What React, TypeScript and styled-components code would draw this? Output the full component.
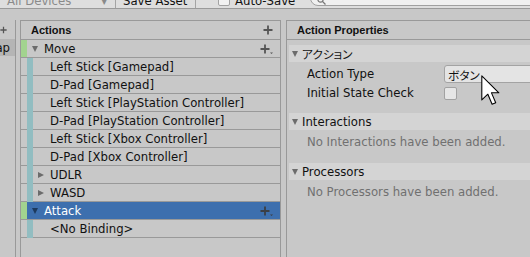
import React from 'react'
import styled, { createGlobalStyle } from 'styled-components'

const GlobalStyle = createGlobalStyle`
  html, body {
    margin: 0;
    padding: 0;
    background: #c8c8c8;
  }
  body {
    font-family: "DejaVu Sans", "Noto Sans CJK JP", sans-serif;
    font-size: 11.7px;
    color: #111;
  }
`

const Window = styled.div`
  position: relative;
  width: 530px;
  height: 257px;
  overflow: hidden;
  display: flex;
  flex-direction: column;
  background: #c8c8c8;
`

/* ---------- toolbar ---------- */

const Toolbar = styled.div`
  flex: none;
  height: 14px;
  margin-top: -6px;
  display: flex;
  align-items: center;
  background: #dedede;
  border-bottom: 1px solid #9a9a9a;
  white-space: nowrap;
`

const DeviceMenu = styled.div`
  box-sizing: border-box;
  width: 116px;
  height: 100%;
  padding: 0 8px 0 7px;
  display: flex;
  align-items: center;
  justify-content: space-between;
  color: #8a8a8a;
  border-right: 1px solid #a4a4a4;
`

const ToolButton = styled.div`
  box-sizing: border-box;
  width: 80px;
  height: 100%;
  padding-left: 7px;
  display: flex;
  align-items: center;
  border-right: 1px solid #a4a4a4;
`

const ToggleLabel = styled.label`
  display: flex;
  align-items: center;
  gap: 5px;
  margin-left: 22px;
`

const CheckBox = styled.span<{ $size: number }>`
  box-sizing: border-box;
  width: ${p => p.$size}px;
  height: ${p => p.$size}px;
  flex: none;
  background: #e6e6e6;
  border: 1px solid #a2a2a2;
  border-radius: 2px;
`

const ToolbarCheck = styled(CheckBox)`
  margin-bottom: 3px;
  background: #f2f2f2;
`

const SearchField = styled.div`
  flex: 1;
  align-self: flex-end;
  height: 16px;
  margin: 0 -6px 2px 15px;
  display: flex;
  align-items: flex-end;
  padding-left: 6px;
  background: #f0f0f0;
  border: 1px solid #a0a0a0;
  border-radius: 8px 0 0 8px;
`

/* ---------- panels ---------- */

const Body = styled.div`
  flex: 1;
  min-height: 0;
  display: flex;
  gap: 4px;
  padding-top: 11px;
`

const MapsPanel = styled.section`
  box-sizing: border-box;
  width: 16px;
  flex: none;
  overflow: hidden;
  border-right: 1px solid #999;
  display: flex;
  flex-direction: column;
`

const MapsHeader = styled.div`
  height: 19px;
  display: flex;
  align-items: center;
  justify-content: flex-end;
  padding-right: 8px;
`

const MapRow = styled.div<{ $selected?: boolean }>`
  height: 17px;
  display: flex;
  align-items: center;
  justify-content: flex-end;
  padding-right: 5px;
  white-space: nowrap;
  background: ${p => (p.$selected ? '#b5b5b5' : 'transparent')};
`

const Panel = styled.section`
  display: flex;
  flex-direction: column;
  border: 1px solid #999;
  border-bottom: none;
`

const ActionsPanel = styled(Panel)`
  box-sizing: border-box;
  width: 261px;
  flex: none;
`

const PropsPanel = styled(Panel)`
  flex: 1;
  margin-left: 1px;
  border-right: none;
`

const PanelHeader = styled.div`
  height: 18px;
  flex: none;
  display: flex;
  align-items: center;
  justify-content: space-between;
  padding: 0 7px 0 10px;
  border-bottom: 1px solid #999;
  font: bold 11px "Liberation Sans", Arial, sans-serif;
  color: #111;
`

/* ---------- action tree ---------- */

const TreeRow = styled.div<{ $selected?: boolean }>`
  height: 17px;
  flex: none;
  display: flex;
  align-items: center;
  padding-right: 7px;
  border-bottom: 1px solid #999;
  white-space: nowrap;
  background: ${p => (p.$selected ? '#3d6fae' : 'transparent')};
  color: ${p => (p.$selected ? '#fff' : '#111')};
`

const Strip = styled.span<{ $color?: string; $through?: boolean }>`
  width: 6px;
  flex: none;
  align-self: stretch;
  margin-bottom: ${p => (p.$through ? '-1px' : '0')};
  background: ${p => p.$color || 'transparent'};
`

const Triangle = styled.span<{ $dir: 'down' | 'right'; $color?: string; $gap: number }>`
  flex: none;
  width: 0;
  height: 0;
  margin-left: ${p => p.$gap}px;
  ${p =>
    p.$dir === 'down'
      ? `border-left: 3.5px solid transparent;
         border-right: 3.5px solid transparent;
         border-top: 6px solid ${p.$color || '#6c6c6c'};`
      : `border-top: 3.5px solid transparent;
         border-bottom: 3.5px solid transparent;
         border-left: 6px solid ${p.$color || '#6c6c6c'};`}
`

const Label = styled.span<{ $gap: number }>`
  flex: 1;
  margin-left: ${p => p.$gap}px;
`

/* ---------- properties ---------- */

const Foldout = styled.div<{ $top: number }>`
  height: 17px;
  flex: none;
  margin: ${p => p.$top}px 0 0 2px;
  padding-left: 3px;
  display: flex;
  align-items: center;
  background: #d4d4d4;
  white-space: nowrap;
`

const FoldoutTitle = styled.span`
  margin-left: 4px;
  font-feature-settings: "palt";
`

const FieldRow = styled.div<{ $top: number }>`
  height: 18px;
  flex: none;
  margin-top: ${p => p.$top}px;
  padding-left: 20px;
  display: flex;
  align-items: center;
  white-space: nowrap;
`

const FieldLabel = styled.span`
  width: 137px;
  flex: none;
`

const Dropdown = styled.div`
  flex: 1;
  align-self: stretch;
  margin-right: -6px;
  padding-left: 3px;
  display: flex;
  align-items: center;
  background: #e4e4e4;
  border: 1px solid #a3a3a3;
  border-radius: 3px;
  font-feature-settings: "palt";
`

const Note = styled.div`
  height: 22px;
  flex: none;
  margin-top: 1px;
  padding-left: 20px;
  display: flex;
  align-items: center;
  color: #707070;
  white-space: nowrap;
`

const Cursor = styled.svg`
  position: absolute;
  left: 481px;
  top: 75px;
`

const AddIcon = ({ menu, color = '#555' }: { menu?: boolean; color?: string }) => (
  <svg width={menu ? 13 : 10} height="10" viewBox={menu ? '0 0 13 10' : '0 0 10 10'}>
    <path d="M5 0.5V9.5M0.5 5H9.5" stroke={color} strokeWidth="1.8" />
    {menu && <path d="M10 8.5H13L11.5 10Z" fill={color} />}
  </svg>
)

type Node =
  | { kind: 'action'; name: string; selected?: boolean }
  | { kind: 'binding'; name: string }
  | { kind: 'composite'; name: string }

const tree: Node[] = [
  { kind: 'action', name: 'Move' },
  { kind: 'binding', name: 'Left Stick [Gamepad]' },
  { kind: 'binding', name: 'D-Pad [Gamepad]' },
  { kind: 'binding', name: 'Left Stick [PlayStation Controller]' },
  { kind: 'binding', name: 'D-Pad [PlayStation Controller]' },
  { kind: 'binding', name: 'Left Stick [Xbox Controller]' },
  { kind: 'binding', name: 'D-Pad [Xbox Controller]' },
  { kind: 'composite', name: 'UDLR' },
  { kind: 'composite', name: 'WASD' },
  { kind: 'action', name: 'Attack', selected: true },
  { kind: 'binding', name: '<No Binding>' },
]

const GREEN = '#a2d38f'
const TEAL = '#92bdc1'

const TreeItem = ({ node }: { node: Node }) => {
  if (node.kind === 'action') {
    return (
      <TreeRow $selected={node.selected}>
        <Strip $color={GREEN} />
        <Triangle $dir="down" $gap={5} $color={node.selected ? '#1d3a5e' : undefined} />
        <Label $gap={6}>{node.name}</Label>
        <AddIcon menu color={node.selected ? '#3b3f46' : '#555'} />
      </TreeRow>
    )
  }
  return (
    <TreeRow>
      <Strip />
      <Strip $color={TEAL} $through />
      {node.kind === 'composite' ? (
        <>
          <Triangle $dir="right" $gap={5} />
          <Label $gap={6}>{node.name}</Label>
        </>
      ) : (
        <Label $gap={17}>{node.name}</Label>
      )}
    </TreeRow>
  )
}

const App = () => {
  return (
    <>
      <GlobalStyle />
      <Window>
        <Toolbar>
          <DeviceMenu>
            <span>All Devices</span>
            <span>▾</span>
          </DeviceMenu>
          <ToolButton>Save Asset</ToolButton>
          <ToggleLabel>
            <ToolbarCheck $size={12} />
            <span>Auto-Save</span>
          </ToggleLabel>
          <SearchField>
            <svg width="9" height="9" viewBox="0 0 9 9">
              <circle cx="3.5" cy="3.5" r="2.6" fill="none" stroke="#777" strokeWidth="1.2" />
              <path d="M5.4 5.4L8.5 8.5" stroke="#777" strokeWidth="1.3" />
            </svg>
          </SearchField>
        </Toolbar>

        <Body>
          <MapsPanel>
            <MapsHeader>
              <AddIcon />
            </MapsHeader>
            <MapRow $selected>Map</MapRow>
          </MapsPanel>

          <ActionsPanel>
            <PanelHeader>
              <span>Actions</span>
              <AddIcon />
            </PanelHeader>
            {tree.map((n, i) => (
              <TreeItem key={i} node={n} />
            ))}
          </ActionsPanel>

          <PropsPanel>
            <PanelHeader>
              <span>Action Properties</span>
            </PanelHeader>
            <Foldout $top={5}>
              <Triangle $dir="down" $gap={0} />
              <FoldoutTitle>アクション</FoldoutTitle>
            </Foldout>
            <FieldRow $top={3}>
              <FieldLabel>Action Type</FieldLabel>
              <Dropdown>ボタン</Dropdown>
            </FieldRow>
            <FieldRow $top={1}>
              <FieldLabel>Initial State Check</FieldLabel>
              <CheckBox $size={13} />
            </FieldRow>
            <Foldout $top={11}>
              <Triangle $dir="down" $gap={0} />
              <FoldoutTitle>Interactions</FoldoutTitle>
            </Foldout>
            <Note>No Interactions have been added.</Note>
            <Foldout $top={10}>
              <Triangle $dir="down" $gap={0} />
              <FoldoutTitle>Processors</FoldoutTitle>
            </Foldout>
            <Note>No Processors have been added.</Note>
          </PropsPanel>
        </Body>

        <Cursor width="19" height="31" viewBox="-0.5 -0.5 12.5 20.5">
          <path
            d="M0 0L0 16L4 12.2L6.8 18.8L9.2 17.8L6.4 11.3L11.3 11.3Z"
            fill="#fff"
            stroke="#000"
            strokeWidth="0.7"
            strokeLinejoin="round"
          />
        </Cursor>
      </Window>
    </>
  )
}

export default App
